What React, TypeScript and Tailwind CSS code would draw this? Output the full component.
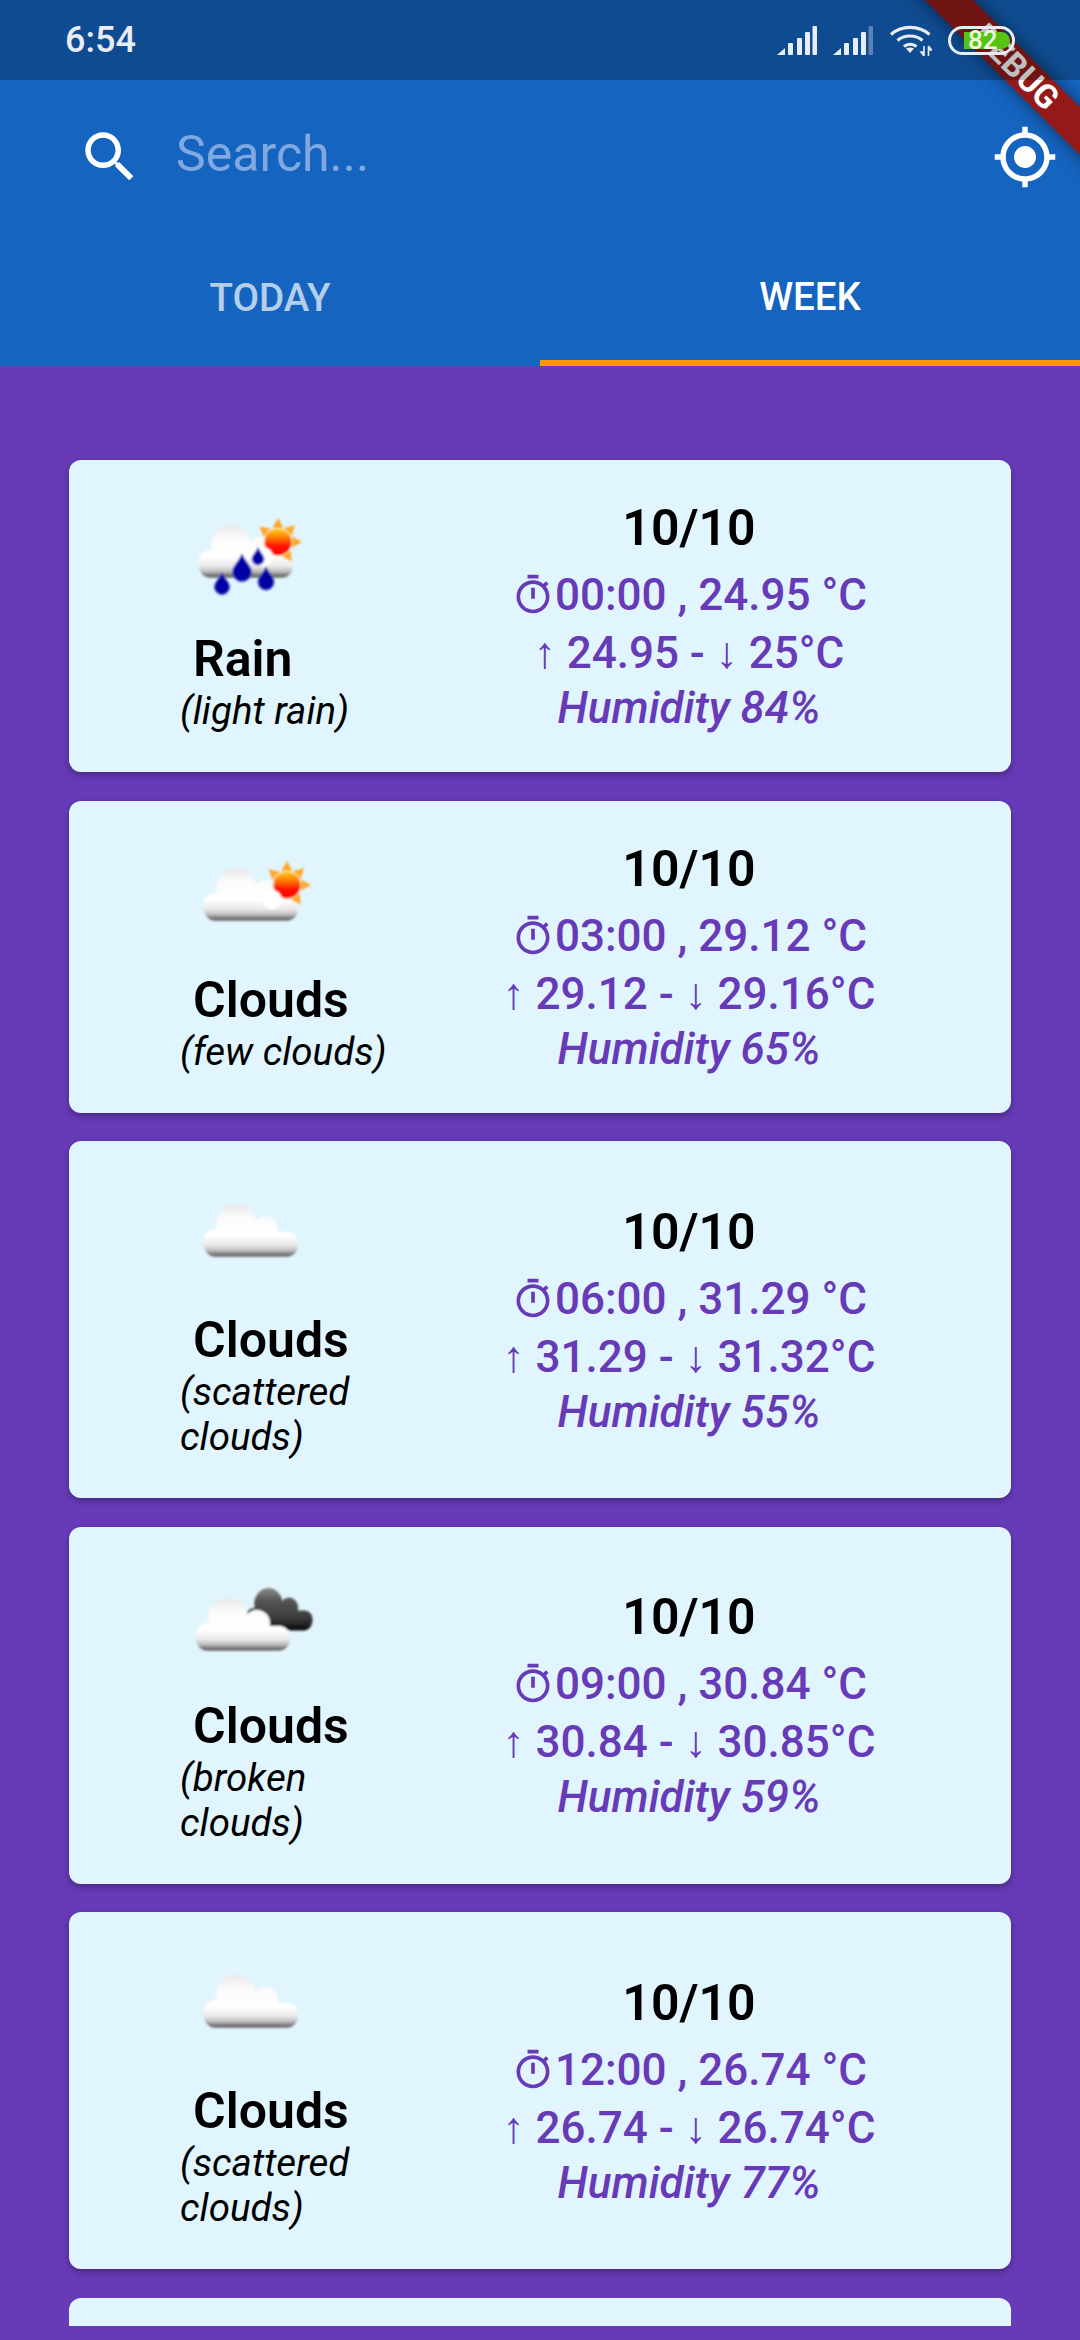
import React from "react";

function CloudShape({ fill }: { fill: string }) {
  return (
    <g fill={fill}>
      <circle cx="33" cy="20" r="20" />
      <circle cx="62" cy="25" r="13" />
      <circle cx="84" cy="39" r="11" />
      <circle cx="13" cy="38" r="13" />
      <rect x="1" y="28" width="94" height="25" rx="12" />
      <rect x="20" y="18" width="50" height="20" />
    </g>
  );
}

function Sun({ x, y }: { x: number; y: number }) {
  const rays = [-50, 0, 45, 90, 145];
  return (
    <g transform={`translate(${x} ${y})`}>
      {rays.map((a) => (
        <polygon key={a} points="-5.5,-14 5.5,-14 0,-24" fill="#ffa726" transform={`rotate(${a})`} />
      ))}
      <circle r="14.5" fill="#fff3c4" opacity="0.7" />
      <circle r="13.5" fill="url(#sunGrad)" />
      <circle cx="-15" cy="15" r="10" fill="#ffffff" />
    </g>
  );
}

function Drop({ x, y, r }: { x: number; y: number; r: number }) {
  return (
    <path
      d={`M${x} ${y - r * 1.9} C${x + r * 0.4} ${y - r} ${x + r} ${y - r * 0.6} ${x + r} ${y} A${r} ${r} 0 1 1 ${x - r} ${y} C${x - r} ${y - r * 0.6} ${x - r * 0.4} ${y - r} ${x} ${y - r * 1.9}Z`}
      fill="#0000a5"
      stroke="#4a50c8"
      strokeWidth="1"
    />
  );
}

function WeatherIcon({ kind }: { kind: "rain" | "few" | "scattered" | "broken" }) {
  return (
    <svg width="150" height="150" viewBox="0 0 150 150" className="ml-[106px] block shrink-0">
      <g filter="url(#soft)">
        {kind === "rain" && (
          <>
            <g transform="translate(23 45)">
              <CloudShape fill="url(#cloudGrad)" />
            </g>
            <Sun x={103} y={62} />
            <Drop x={47} y={107} r={7.5} />
            <Drop x={67} y={92} r={9.5} />
            <Drop x={91} y={102} r={8} />
            <Drop x={83} y={79} r={6} />
          </>
        )}
        {kind === "few" && (
          <>
            <g transform="translate(28 47)">
              <CloudShape fill="url(#cloudGrad)" />
            </g>
            <Sun x={112} y={64} />
          </>
        )}
        {kind === "scattered" && (
          <g transform="translate(28 43)">
            <CloudShape fill="url(#cloudGrad)" />
          </g>
        )}
        {kind === "broken" && (
          <>
            <g transform="translate(70 41) scale(0.71 0.8)">
              <CloudShape fill="url(#darkGrad)" />
            </g>
            <g transform="translate(20 51)">
              <CloudShape fill="url(#cloudGrad)" />
            </g>
          </>
        )}
      </g>
    </svg>
  );
}

function Timer() {
  return (
    <svg width="44" height="44" viewBox="0 0 24 24" fill="#673ab7" className="shrink-0">
      <path d="M15 1H9v2h6V1zm-4 13h2V8h-2v6zm8.03-6.61l1.42-1.42c-.43-.51-.9-.99-1.41-1.41l-1.42 1.42C16.07 4.74 14.12 4 12 4c-4.97 0-9 4.03-9 9s4.02 9 9 9 9-4.03 9-9c0-2.12-.74-4.07-1.97-5.61zM12 20c-3.87 0-7-3.13-7-7s3.13-7 7-7 7 3.13 7 7-3.13 7-7 7z" />
    </svg>
  );
}

type Row = {
  kind: "rain" | "few" | "scattered" | "broken";
  title: string;
  sub: string;
  time: string;
  temp: string;
  hi: string;
  lo: string;
  hum: string;
};

const rows: Row[] = [
  { kind: "rain", title: "Rain", sub: "(light rain)", time: "00:00", temp: "24.95", hi: "24.95", lo: "25", hum: "84" },
  { kind: "few", title: "Clouds", sub: "(few clouds)", time: "03:00", temp: "29.12", hi: "29.12", lo: "29.16", hum: "65" },
  { kind: "scattered", title: "Clouds", sub: "(scattered clouds)", time: "06:00", temp: "31.29", hi: "31.29", lo: "31.32", hum: "55" },
  { kind: "broken", title: "Clouds", sub: "(broken clouds)", time: "09:00", temp: "30.84", hi: "30.84", lo: "30.85", hum: "59" },
  { kind: "scattered", title: "Clouds", sub: "(scattered clouds)", time: "12:00", temp: "26.74", hi: "26.74", lo: "26.74", hum: "77" },
];

function Card({ r }: { r: Row }) {
  return (
    <div className="flex shrink-0 rounded-[12px] bg-[#e1f5fe] shadow-[0_3px_6px_rgba(0,0,0,0.3)]">
      <div className="w-[331px] shrink-0 pt-[20px] pb-[39px]">
        <WeatherIcon kind={r.kind} />
        <div className="ml-[124px] h-[56px] text-[50px] leading-[59px] font-semibold text-black">{r.title}</div>
        <div className="ml-[111px] mt-[2px] w-[210px] text-[38.5px] leading-[45px] italic text-black">{r.sub}</div>
      </div>
      <div className="flex w-[578px] flex-col items-center justify-center text-[#673ab7]">
        <div className="h-[70px] text-[50px] leading-[62px] font-semibold text-black">10/10</div>
        <div className="flex h-[56px] items-center text-[44px] leading-[56px] font-medium">
          <Timer />
          <span>{r.time} , {r.temp} °C</span>
        </div>
        <div className="h-[58px] text-[44px] leading-[60px] font-medium whitespace-pre">
          <span className="font-normal">↑</span> {r.hi} - <span className="font-normal">↓</span> {r.lo}°C
        </div>
        <div className="h-[54px] text-[44px] leading-[54px] font-medium italic">Humidity {r.hum}%</div>
      </div>
    </div>
  );
}

function Signal({ dim }: { dim?: boolean }) {
  return (
    <svg width="40" height="29" viewBox="0 0 40 29" fill="#e8edf5">
      <polygon points="0,29 8,22 8,29" />
      <rect x="11" y="17" width="5" height="12" rx="1" />
      <rect x="20" y="12" width="5" height="17" rx="1" />
      <rect x="28" y="6" width="5" height="23" rx="1" />
      <rect x="35.5" y="0" width="4.5" height="29" rx="1" opacity={dim ? 0.35 : 1} />
    </svg>
  );
}

function Wifi() {
  return (
    <svg width="43" height="32" viewBox="0 0 43 32" fill="none" stroke="#e8edf5" strokeWidth="3.2">
      <path d="M2 10.5C12 1 30 1 40.5 10.5" />
      <path d="M8.5 16.5C15 10.5 27 10.5 33.5 16.5" />
      <path d="M15 22.5C18.5 19.5 24 19.5 27.5 22.5" />
      <path d="M21 29l-4-4.5c2.5-1.5 5.5-1.5 8 0z" fill="#e8edf5" stroke="none" />
      <path d="M35 22v10M35 32l-3-4h3M39.5 32V22M39.5 22l3 4h-3" strokeWidth="1.6" />
    </svg>
  );
}

export default function App() {
  return (
    <div
      className="relative flex h-[2340px] w-[1080px] flex-col overflow-hidden bg-[#673ab7]"
      style={{ fontFamily: "Roboto, 'Noto Sans', sans-serif" }}
    >
      <svg className="absolute h-0 w-0">
        <defs>
          <linearGradient id="cloudGrad" gradientUnits="userSpaceOnUse" x1="0" y1="0" x2="0" y2="53">
            <stop offset="0" stopColor="#e8e8e8" />
            <stop offset="0.25" stopColor="#fbfbfb" />
            <stop offset="0.6" stopColor="#ffffff" />
            <stop offset="0.78" stopColor="#e8e8e8" />
            <stop offset="0.88" stopColor="#bcbcbc" />
            <stop offset="0.96" stopColor="#6a6a6a" />
            <stop offset="1" stopColor="#8a8a8a" />
          </linearGradient>
          <linearGradient id="darkGrad" gradientUnits="userSpaceOnUse" x1="0" y1="0" x2="0" y2="53">
            <stop offset="0" stopColor="#8a8a8a" />
            <stop offset="0.3" stopColor="#555555" />
            <stop offset="0.7" stopColor="#3d3d3d" />
            <stop offset="1" stopColor="#0a0a0a" />
          </linearGradient>
          <linearGradient id="sunGrad" x1="0" y1="0" x2="0" y2="1">
            <stop offset="0" stopColor="#ffd21f" />
            <stop offset="0.4" stopColor="#ff6a00" />
            <stop offset="0.65" stopColor="#ff1200" />
            <stop offset="1" stopColor="#ff0000" />
          </linearGradient>
          <filter id="soft" x="-10%" y="-10%" width="120%" height="120%">
            <feGaussianBlur stdDeviation="0.9" />
          </filter>
        </defs>
      </svg>

      <header className="flex shrink-0 flex-col bg-[#1565c0] pt-[80px]">
        <div className="flex h-[154px] items-center">
          <svg width="66" height="66" viewBox="0 0 24 24" fill="#fff" className="ml-[77px] shrink-0">
            <path d="M15.5 14h-.79l-.28-.27C15.41 12.59 16 11.11 16 9.5 16 5.91 13.09 3 9.5 3S3 5.91 3 9.5 5.91 16 9.5 16c1.61 0 3.09-.59 4.23-1.57l.27.28v.79l5 4.99L20.49 19l-4.99-5zm-6 0C7.01 14 5 11.99 5 9.5S7.01 5 9.5 5 14 7.01 14 9.5 11.99 14 9.5 14z" />
          </svg>
          <div className="ml-[33px] mb-[6px] text-[50px] leading-[56px] text-[#7fa9e0]">Search...</div>
          <svg width="66" height="66" viewBox="0 0 24 24" fill="#fff" className="ml-auto mr-[22px] shrink-0">
            <path d="M12 8c-2.21 0-4 1.79-4 4s1.79 4 4 4 4-1.79 4-4-1.79-4-4-4zm8.94 3c-.46-4.17-3.77-7.48-7.94-7.94V1h-2v2.06C6.83 3.52 3.52 6.83 3.06 11H1v2h2.06c.46 4.17 3.77 7.48 7.94 7.94V23h2v-2.06c4.17-.46 7.48-3.77 7.94-7.94H23v-2h-2.06zM12 19c-3.87 0-7-3.13-7-7s3.13-7 7-7 7 3.13 7 7-3.13 7-7 7z" />
          </svg>
        </div>
        <div className="flex h-[132px]">
          <div className="flex flex-1 items-center justify-center pb-[4px] text-[38.5px] font-medium text-white/70">TODAY</div>
          <div className="flex flex-1 items-center justify-center border-b-[6px] border-[#ff9800] text-[38.5px] font-medium text-white">WEEK</div>
        </div>
      </header>

      <main className="flex h-[1960px] shrink-0 flex-col gap-[28.5px] overflow-hidden px-[69px] pt-[94px]">
        {rows.map((r) => (
          <Card key={r.time} r={r} />
        ))}
        <div className="h-[357px] shrink-0 rounded-[12px] bg-[#e1f5fe]" />
      </main>

      <div className="absolute left-[866px] top-[50px] flex h-[34px] w-[300px] rotate-45 items-center justify-center bg-[#941a1a] text-[33px] font-bold text-white shadow-[0_0_18px_rgba(0,0,0,0.5)]">
        DEBUG
      </div>

      <div className="absolute left-0 top-0 flex h-[80px] w-full items-center bg-black/25 pl-[65px] pr-[65px]">
        <span className="text-[36px] font-medium text-[#e8edf5]">6:54</span>
        <div className="ml-auto flex items-center gap-[16px]">
          <Signal />
          <Signal dim />
          <Wifi />
          <div className="relative h-[29px] w-[67px] rounded-full border-[3px] border-[#e8edf5]">
            <div className="absolute left-[13px] top-[3px] h-[17px] w-[46px] rounded-r-full bg-[#57c414]" />
            <span className="absolute left-[17px] top-[-3px] text-[26px] leading-[28px] font-medium text-[#eefbe0]">82</span>
          </div>
        </div>
      </div>
    </div>
  );
}
